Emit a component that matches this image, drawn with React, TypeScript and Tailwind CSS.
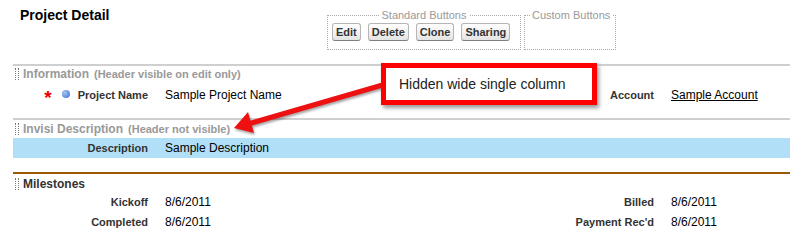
import React from "react";

const Grip: React.FC = () => (
  <div className="w-[4px] h-[12px] border-x border-dotted border-[#777] shrink-0" />
);

const SectionHeader: React.FC<{ title: string; note?: string; dark?: boolean }> = ({ title, note, dark }) => (
  <div className="flex items-center h-[16px] pl-[2px] gap-[4px]">
    <Grip />
    <span className={"text-[12px] font-bold " + (dark ? "text-[#333]" : "text-[#999]")}>{title}</span>
    {note && <span className="text-[11px] font-bold text-[#999] ml-[1px]">{note}</span>}
  </div>
);

const Label: React.FC<{ children: React.ReactNode }> = ({ children }) => (
  <div className="text-right text-[11px] font-bold text-[#333] leading-[20px]">{children}</div>
);

const Value: React.FC<{ children: React.ReactNode }> = ({ children }) => (
  <div className="pl-[17px] text-[12px] text-black leading-[20px]">{children}</div>
);

const Btn: React.FC<{ children: React.ReactNode }> = ({ children }) => (
  <button className="h-[18px] px-[3px] text-[11px] font-bold text-[#333] rounded-[3px] border border-[#b5b5b5] border-b-[#7f7f7f] bg-gradient-to-b from-white to-[#e4e4e4] leading-[14px]">
    {children}
  </button>
);

export default function App() {
  return (
    <div className="relative w-[790px] h-[241px] bg-white overflow-hidden font-['Liberation_Sans',Arial,sans-serif]">
      {/* header */}
      <div className="flex items-start pl-[20px] pt-[7px] h-[64px]">
        <h1 className="w-[307px] text-[14px] font-bold leading-[17px] text-black">Project Detail</h1>
        <fieldset className="mt-[2px] w-[194px] h-[41px] border border-dotted border-[#aaa] px-[4px]">
          <legend className="mx-auto px-[2px] text-[11px] leading-[12px] text-[#999]">Standard Buttons</legend>
          <div className="flex gap-[7px] mt-[2px]">
            <Btn>Edit</Btn>
            <Btn>Delete</Btn>
            <Btn>Clone</Btn>
            <Btn>Sharing</Btn>
          </div>
        </fieldset>
        <fieldset className="mt-[2px] ml-[3px] w-[92px] h-[41px] border border-dotted border-[#aaa]">
          <legend className="ml-[5px] px-[2px] text-[11px] leading-[12px] text-[#999]">Custom Buttons</legend>
        </fieldset>
      </div>

      {/* Information */}
      <div className="ml-[13px] border-t-2 border-[#cfcfcf]">
        <SectionHeader title="Information" note="(Header visible on edit only)" />
        <div className="grid grid-cols-[135px_371px_135px_1fr] mt-[3px] mb-[13px]">
          <div className="flex items-center justify-end h-[20px]">
            <span className="text-[#e00] text-[19px] font-bold leading-[20px] mt-[6px] mr-[10px]">*</span>
            <span className="w-[8px] h-[8px] rounded-full bg-[radial-gradient(circle_at_35%_35%,#a6c4f2,#3a6cd0)] mr-[8px] -mt-[3px]" />
            <span className="text-[11px] font-bold text-[#333] leading-[20px]">Project Name</span>
          </div>
          <Value>Sample Project Name</Value>
          <Label>Account</Label>
          <Value>
            <span className="underline">Sample Account</span>
          </Value>
        </div>
      </div>

      {/* Invisi Description */}
      <div className="ml-[13px] border-t-2 border-[#cfcfcf]">
        <div className="mt-[1px]">
          <SectionHeader title="Invisi Description" note="(Header not visible)" />
        </div>
        <div className="grid grid-cols-[135px_1fr] mt-[1px] mb-[14px] bg-[#b0dff7]">
          <Label>Description</Label>
          <Value>Sample Description</Value>
        </div>
      </div>

      {/* Milestones */}
      <div className="ml-[13px] border-t-2 border-[#9c5a06]">
        <div className="mt-[2px]">
          <SectionHeader title="Milestones" dark />
        </div>
        <div className="grid grid-cols-[135px_371px_135px_1fr]">
          <Label>Kickoff</Label>
          <Value>8/6/2011</Value>
          <Label>Billed</Label>
          <Value>8/6/2011</Value>
          <Label>Completed</Label>
          <Value>8/6/2011</Value>
          <Label>Payment Rec'd</Label>
          <Value>8/6/2011</Value>
        </div>
      </div>

      {/* callout arrow */}
      <svg
        className="absolute left-0 top-0 pointer-events-none drop-shadow-[1px_2px_1px_rgba(0,0,0,0.35)]"
        width="790"
        height="241"
      >
        <line x1="386" y1="84" x2="248" y2="124" stroke="#ee1111" strokeWidth="5" />
        <polygon points="234,128 248,112 254,133" fill="#ee1111" />
      </svg>

      {/* callout box */}
      <div className="absolute left-[381px] top-[63px] w-[216px] h-[42px] border-[5px] border-[#f00] bg-white shadow-[2px_3px_4px_rgba(0,0,0,0.4)] flex items-center pl-[13px]">
        <span className="text-[14px] text-[#222]">Hidden wide single column</span>
      </div>
    </div>
  );
}
